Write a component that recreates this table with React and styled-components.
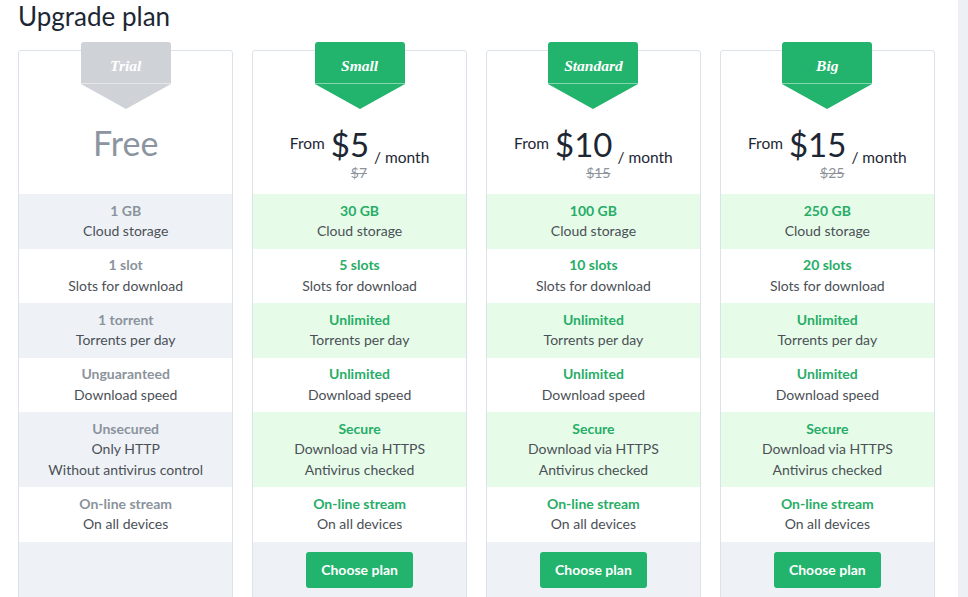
import React from "react";
import styled, { createGlobalStyle } from "styled-components";

const GlobalStyle = createGlobalStyle`
  html, body { margin: 0; padding: 0; background: #ffffff; }
  body { font-family: Lato, "Noto Sans", sans-serif; color: #4a5057; overflow: hidden; }
  * { box-sizing: border-box; }
`;

const GREEN = "#22b36d";

const Page = styled.div`
  display: flex;
  min-height: 100vh;
`;

const Main = styled.main`
  flex: 1;
  padding: 0 23px 0 18px;
`;

const Aside = styled.aside`
  width: 10px;
  background: #edf0f4;
`;

const Title = styled.h1`
  margin: 0;
  font-size: 26px;
  line-height: 32px;
  font-weight: 400;
  color: #1d2733;
`;

const Grid = styled.div`
  display: grid;
  grid-template-columns: repeat(4, 1fr);
  column-gap: 18.5px;
  margin-top: 18px;
`;

const Card = styled.section`
  border: 1px solid #dce2ea;
  border-radius: 3px;
  display: flex;
  flex-direction: column;
  background: #fff;
`;

const Header = styled.div`
  height: 143px;
  display: flex;
  flex-direction: column;
  align-items: center;
`;

const Badge = styled.div`
  width: 90px;
  margin-top: -9px;
  display: flex;
  flex-direction: column;
  align-items: center;
`;

const BadgeBox = styled.div`
  width: 100%;
  height: 42px;
  padding-top: 7px;
  border-radius: 3px 3px 0 0;
  background: ${(p) => p.$color};
  border-bottom: 1px solid rgba(255, 255, 255, 0.45);
  display: flex;
  align-items: center;
  justify-content: center;
  font-family: "Liberation Serif", "DejaVu Serif", serif;
  font-style: italic;
  font-weight: 700;
  font-size: 15.5px;
  color: #fff;
`;

const BadgeArrow = styled.div`
  width: 0;
  height: 0;
  border-left: 45px solid transparent;
  border-right: 45px solid transparent;
  border-top: 25px solid ${(p) => p.$color};
`;

const Free = styled.div`
  margin-top: 14px;
  font-size: 34px;
  line-height: 40px;
  color: #8c959f;
`;

const PriceLine = styled.div`
  margin-top: 17px;
  font-size: 15.5px;
  line-height: 34px;
  color: #1d2733;
  white-space: nowrap;
`;

const From = styled.span`
  vertical-align: 8px;
  margin-right: 6px;
`;

const Amount = styled.span`
  display: inline-flex;
  flex-direction: column;
  align-items: flex-end;
  vertical-align: baseline;
`;

const Big = styled.span`
  font-size: 33px;
  line-height: 32px;
`;

const Old = styled.span`
  font-size: 14px;
  line-height: 16px;
  color: #8d949b;
  text-decoration: line-through;
  margin-right: 2px;
  margin-top: 5px;
`;

const Per = styled.span`
  vertical-align: -6px;
  margin-left: 5px;
`;

const Row = styled.div`
  padding: 6.75px 4px;
  text-align: center;
  font-size: 14px;
  line-height: 20.5px;
  background: ${(p) => (p.$tinted ? (p.$trial ? "#eef2f7" : "#e6fce9") : "#ffffff")};
`;

const Value = styled.div`
  font-weight: 700;
  color: ${(p) => (p.$trial ? "#8b939c" : "#27ad67")};
`;

const Label = styled.div`
  color: #4b5056;
`;

const Footer = styled.div`
  background: #eef2f7;
  padding: 10px 0;
  min-height: 58px;
  display: flex;
  justify-content: center;
`;

const Button = styled.button`
  width: 107px;
  height: 36px;
  border: none;
  border-radius: 3px;
  background: ${GREEN};
  color: #fff;
  font-family: Lato, "Noto Sans", sans-serif;
  font-size: 14px;
  font-weight: 700;
  cursor: pointer;
`;

const plans = [
  {
    name: "Trial",
    trial: true,
    rows: [
      ["1 GB", "Cloud storage"],
      ["1 slot", "Slots for download"],
      ["1 torrent", "Torrents per day"],
      ["Unguaranteed", "Download speed"],
      ["Unsecured", "Only HTTP", "Without antivirus control"],
      ["On-line stream", "On all devices"],
    ],
  },
  ...[
    ["Small", 5, 7, "30 GB", "5 slots"],
    ["Standard", 10, 15, "100 GB", "10 slots"],
    ["Big", 15, 25, "250 GB", "20 slots"],
  ].map(([name, price, old, gb, slots]) => ({
    name,
    price,
    old,
    rows: [
      [gb, "Cloud storage"],
      [slots, "Slots for download"],
      ["Unlimited", "Torrents per day"],
      ["Unlimited", "Download speed"],
      ["Secure", "Download via HTTPS", "Antivirus checked"],
      ["On-line stream", "On all devices"],
    ],
  })),
];

function Plan({ plan }) {
  const color = plan.trial ? "#cfd3d8" : GREEN;
  return (
    <Card>
      <Header>
        <Badge>
          <BadgeBox $color={color}>{plan.name}</BadgeBox>
          <BadgeArrow $color={color} />
        </Badge>
        {plan.trial ? (
          <Free>Free</Free>
        ) : (
          <PriceLine>
            <From>From</From>
            <Amount>
              <Big>${plan.price}</Big>
              <Old>${plan.old}</Old>
            </Amount>
            <Per>/ month</Per>
          </PriceLine>
        )}
      </Header>
      {plan.rows.map(([value, ...labels], i) => (
        <Row key={i} $tinted={i % 2 === 0} $trial={plan.trial}>
          <Value $trial={plan.trial}>{value}</Value>
          {labels.map((l) => (
            <Label key={l}>{l}</Label>
          ))}
        </Row>
      ))}
      <Footer>{!plan.trial && <Button>Choose plan</Button>}</Footer>
    </Card>
  );
}

export default function App() {
  return (
    <>
      <GlobalStyle />
      <Page>
        <Main>
          <Title>Upgrade plan</Title>
          <Grid>
            {plans.map((p) => (
              <Plan key={p.name} plan={p} />
            ))}
          </Grid>
        </Main>
        <Aside />
      </Page>
    </>
  );
}
